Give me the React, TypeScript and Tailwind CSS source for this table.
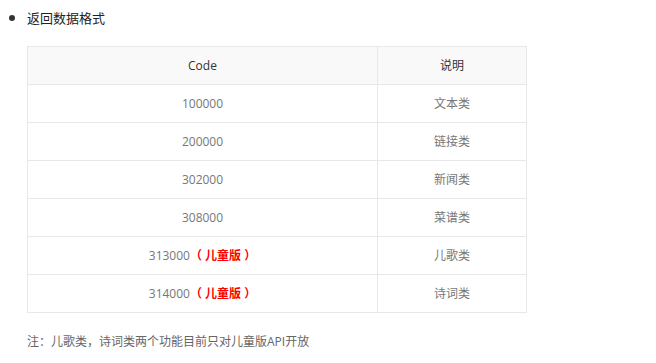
import React from "react";

const rows: { code: string; kid?: boolean; desc: string }[] = [
  { code: "100000", desc: "文本类" },
  { code: "200000", desc: "链接类" },
  { code: "302000", desc: "新闻类" },
  { code: "308000", desc: "菜谱类" },
  { code: "313000", kid: true, desc: "儿歌类" },
  { code: "314000", kid: true, desc: "诗词类" },
];

export default function App() {
  return (
    <div
      className="w-[656px] h-[363px] bg-white text-[12px] text-[#333]"
      style={{ fontFamily: '"Open Sans", "Noto Sans CJK SC", sans-serif' }}
    >
      <div className="flex items-center pl-[9px] pt-[9px] h-[26px]">
        <span className="w-[6px] h-[6px] rounded-full bg-[#333] mr-[12px]"></span>
        <span className="text-[13px] text-[#222] leading-[16px]">返回数据格式</span>
      </div>
      <div className="pl-[27px] pt-[20px]">
        <table className="w-[500px] border-collapse border border-[#e8e8e8] text-center">
          <thead>
            <tr className="h-[38px] bg-[#f9f9f9]">
              <th className="w-[350px] border border-[#e8e8e8] font-normal text-[#333]">Code</th>
              <th className="border border-[#e8e8e8] font-normal text-[#333]">说明</th>
            </tr>
          </thead>
          <tbody>
            {rows.map((r) => (
              <tr key={r.code} className="h-[38px]">
                <td className="border border-[#e8e8e8] text-[#777]">
                  {r.code}
                  {r.kid && <span className="text-[#f00] font-bold">（ 儿童版 ）</span>}
                </td>
                <td className="border border-[#e8e8e8] text-[#777]">{r.desc}</td>
              </tr>
            ))}
          </tbody>
        </table>
        <div className="mt-[21px] text-[#666] leading-[16px]">注：儿歌类，诗词类两个功能目前只对儿童版API开放</div>
      </div>
    </div>
  );
}
